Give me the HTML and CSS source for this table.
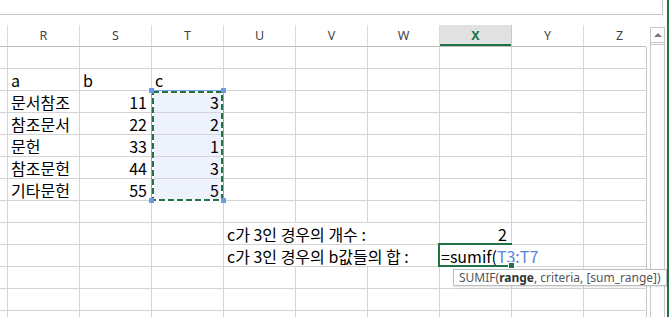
FILE: index.html
```html
<!DOCTYPE html>
<html>
<head>
    <title>Sheet1 - Excel</title>
    <link rel="stylesheet" href="styles.css">
</head>
<body>
    <div class="app">
        <div class="main">
            <div class="formula-bar"></div>
            <div class="view">
                <div class="sheet">
                    <div class="heads" id="heads"></div>
                    <div class="grid" id="grid"></div>
                    <!-- range outline for the T3:T7 argument -->
                    <svg class="ref-box" width="80" height="120" viewBox="0 0 80 120">
                        <rect x="4.5" y="4.5" width="72" height="110" fill="none" stroke="#7ea2ea" stroke-width="1"/>
                        <rect x="6" y="6" width="69" height="108" fill="none" stroke="#fff" stroke-width="2"/>
                        <rect x="6" y="6" width="69" height="108" fill="none" stroke="#217346" stroke-width="2" stroke-dasharray="6 3"/>
                        <rect x="2" y="2" width="5" height="5" fill="#6f98e8"/>
                        <rect x="74" y="2" width="5" height="5" fill="#6f98e8"/>
                        <rect x="2" y="112" width="5" height="5" fill="#6f98e8"/>
                        <rect x="74" y="112" width="5" height="5" fill="#6f98e8"/>
                    </svg>
                    <div class="tip">SUMIF(<b>range</b>, criteria, [sum_range])</div>
                </div>
                <div class="vscroll"><div class="arrow-up"></div><div class="thumb"></div></div>
            </div>
        </div>
        <div class="edge"></div>
    </div>

    <script>
        const cols = ['R', 'S', 'T', 'U', 'V', 'W', 'X', 'Y', 'Z'];
        const rows = {
            2: { R: 'a', S: 'b', T: 'c' },
            3: { R: '문서참조', S: 11, T: 3 },
            4: { R: '참조문서', S: 22, T: 2 },
            5: { R: '문헌', S: 33, T: 1 },
            6: { R: '참조문헌', S: 44, T: 3 },
            7: { R: '기타문헌', S: 55, T: 5 },
            9: { U: 'c가 3인 경우의 개수 :', X: 2 },
            10: { U: 'c가 3인 경우의 b값들의 합 :', X: '=sumif(<span class="ref">T3:T7</span>' }
        };

        document.getElementById('heads').innerHTML = '<div></div>' +
            cols.map(c => `<div class="${c === 'X' ? 'cur' : ''}">${c}</div>`).join('');

        let html = '';
        for (let r = 1; r <= 13; r++) {
            const d = rows[r] || {};
            html += '<div></div>';
            for (let i = 0; i < cols.length; i++) {
                const c = cols[i];
                const v = d[c];
                let cls = [];
                if (typeof v === 'number') cls.push('num');
                if (c === 'T' && r >= 3 && r <= 7) cls.push('sel');
                if (c === 'X' && r === 10) cls.push('active');
                // labels in U spill over V and W
                if (c === 'U' && v !== undefined) { cls.push('wide'); i += 2; }
                html += `<div class="${cls.join(' ')}">${v === undefined ? '' : v}</div>`;
            }
        }
        document.getElementById('grid').innerHTML = html;
    </script>
</body>
</html>
```

FILE: styles.css
```css
body { margin: 0; width: 669px; height: 317px; overflow: hidden; background: #fff; font-family: "Noto Sans CJK KR", sans-serif; }
.app { display: flex; height: 317px; }
.main { width: 667px; }
.edge { width: 2px; background: #217346; }
.formula-bar { width: 662px; height: 14px; border-right: 1px solid #c6c6c6; border-bottom: 1px solid #c6c6c6; margin-bottom: 10px; }
.view { display: flex; height: 292px; }
.sheet { position: relative; width: 647px; }

.heads { display: grid; grid-template-columns: 8px repeat(9, 72px); width: 646px; overflow: hidden; }
.heads div { height: 22px; box-sizing: border-box; border-right: 1px solid #dadada; border-bottom: 1px solid #bdbdbd; text-align: center; font: 12.5px/21px "Noto Sans", sans-serif; color: #444; }
.heads div.cur { background: #e1e1e1; color: #217346; font-weight: bold; box-shadow: inset 0 -2px #217346; border-right-color: #c8c8c8; }

.grid { display: grid; grid-template-columns: 8px repeat(9, 72px); grid-auto-rows: 22px; width: 646px; height: 270px; overflow: hidden; border-right: 1px solid #c6c6c6; }
.grid div { box-sizing: border-box; border-right: 1px solid #d4d4d4; border-bottom: 1px solid #d4d4d4; padding: 0 4px 0 3px; font-size: 16px; line-height: 22px; color: #000; white-space: nowrap; }
.grid .num { text-align: right; }
.grid .sel { background: #edf2fc; }
.grid .wide { grid-column: span 3; }
.grid .active { position: relative; padding-left: 1px; border-right-color: transparent; }
.grid .active::before { content: ""; position: absolute; left: -2px; top: -2px; width: 72px; height: 20px; border: 2px solid #217346; border-right: none; }
.grid .active::after { content: ""; position: absolute; left: 68px; bottom: -3px; width: 5px; height: 5px; background: #217346; border: 1px solid #fff; }
.ref { color: #5b86e0; }

.ref-box { position: absolute; left: 147px; top: 61px; }
.tip { position: absolute; left: 453px; top: 244px; height: 17px; box-sizing: border-box; padding: 0 5px; border: 1px solid #bdbdbd; background: #fff; box-shadow: 1px 1px 2px rgba(0, 0, 0, 0.12); font: 12px/15px "Noto Sans", sans-serif; color: #555; white-space: nowrap; z-index: 2; }
.tip b { color: #333; }

.vscroll { width: 15px; margin: 2px 0 0 3px; box-sizing: border-box; border: 1px solid #c8c8c8; border-bottom: none; display: flex; flex-direction: column; }
.arrow-up { height: 14px; border-bottom: 1px solid #c8c8c8; display: flex; align-items: center; justify-content: center; }
.arrow-up::after { content: ""; border-left: 4px solid transparent; border-right: 4px solid transparent; border-bottom: 4px solid #777; }
.thumb { flex: 1; margin-top: 1px; border-top: 1px solid #c8c8c8; }
```
